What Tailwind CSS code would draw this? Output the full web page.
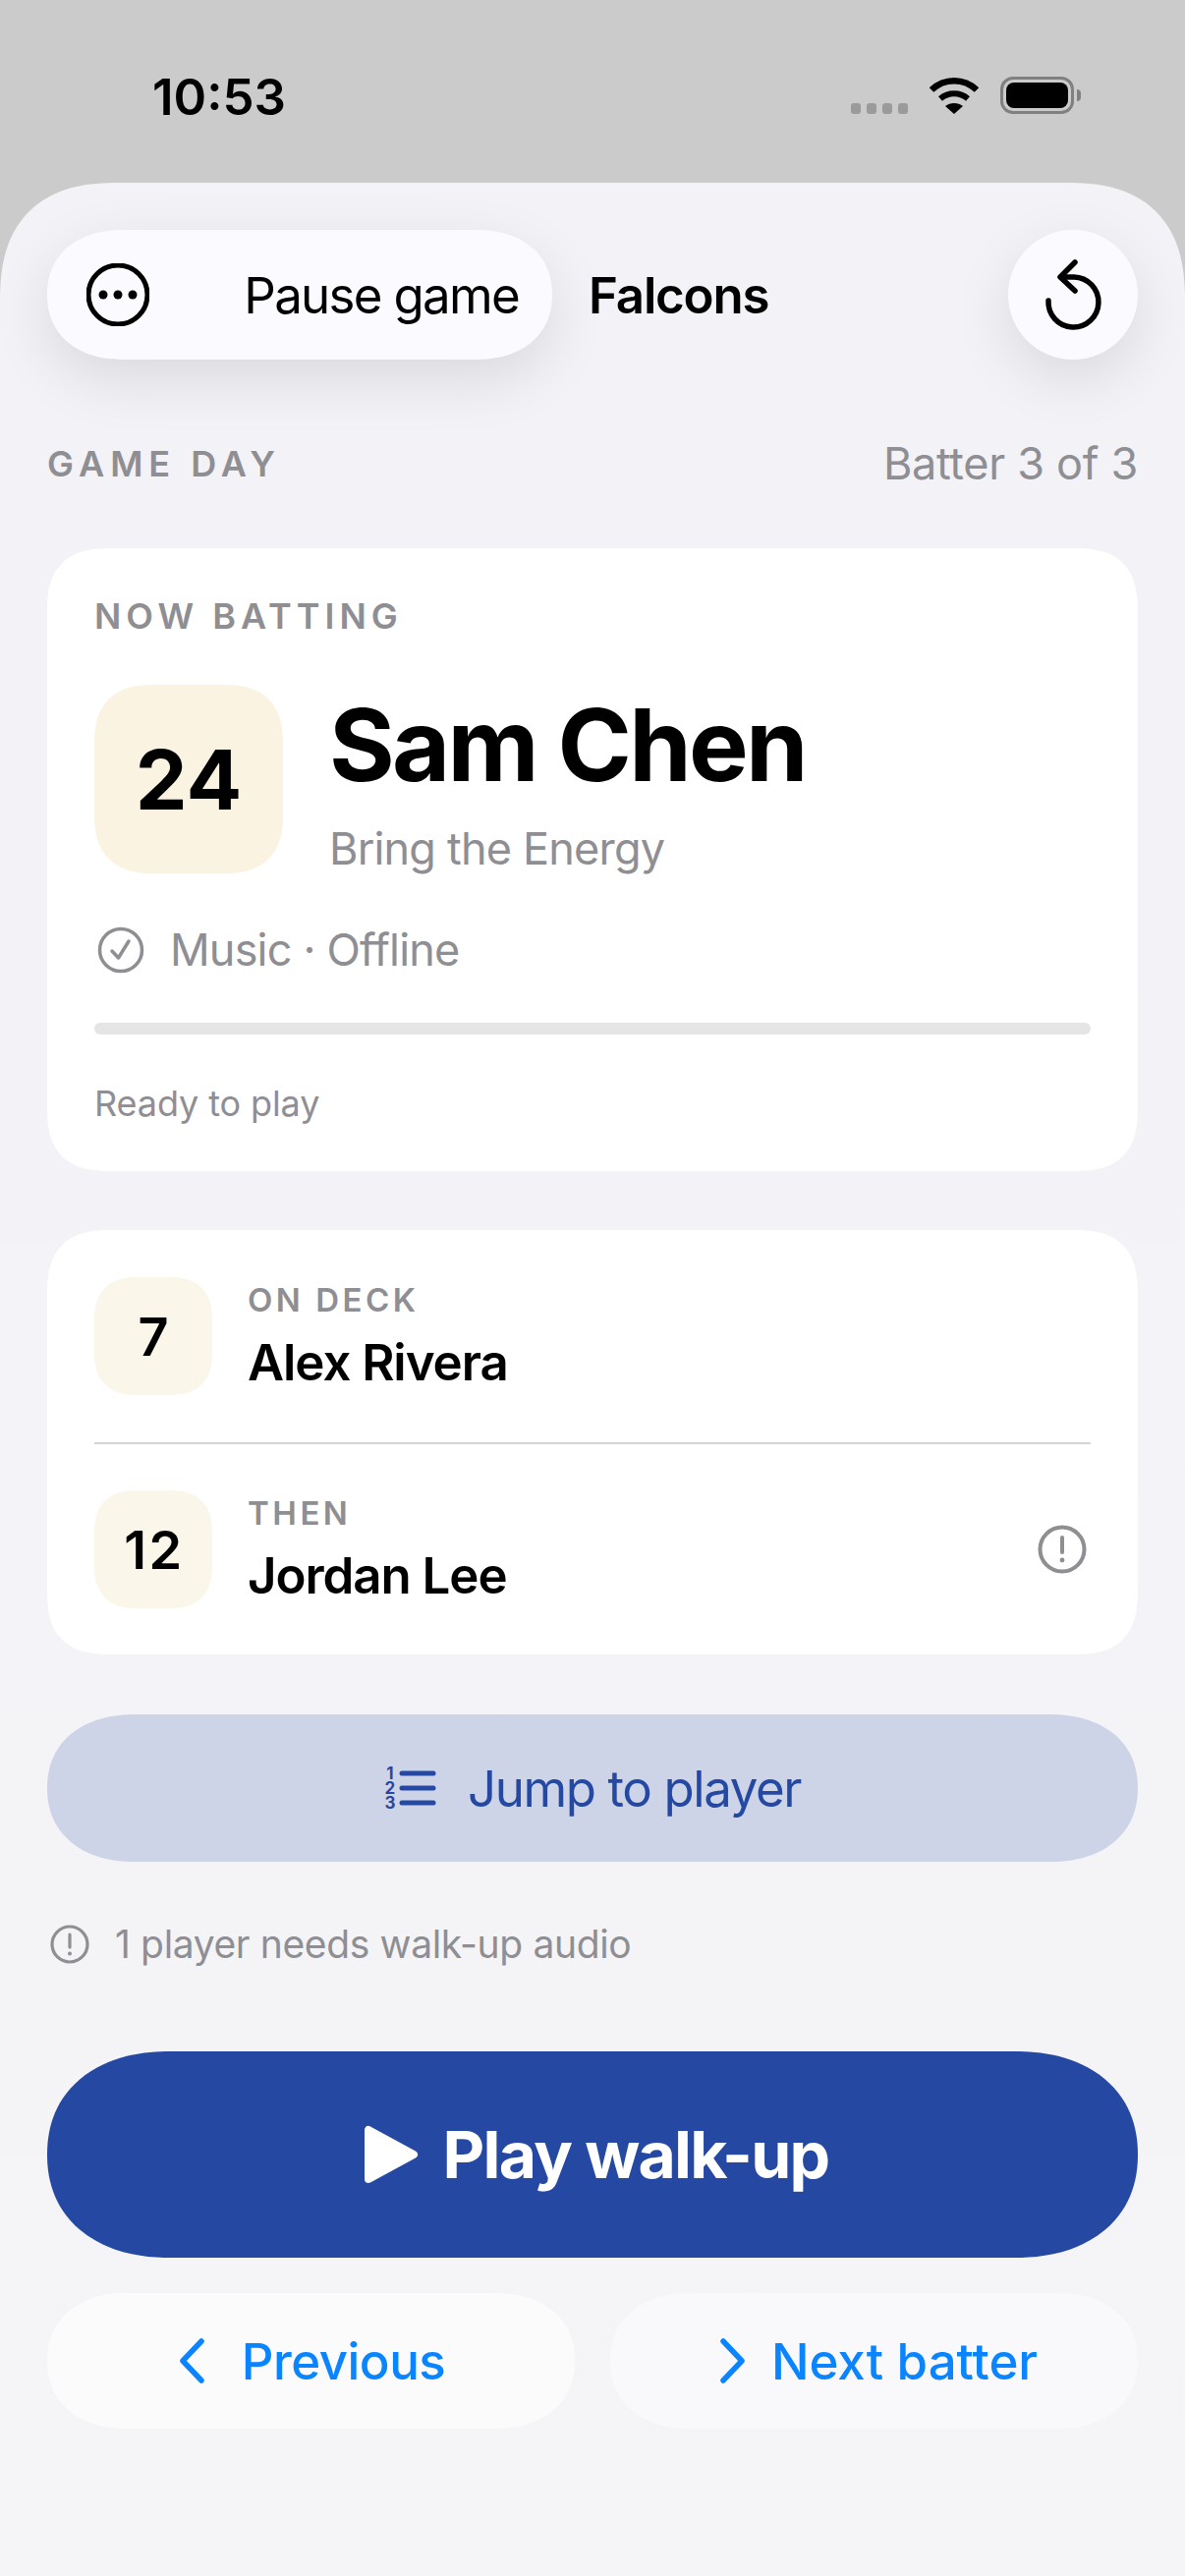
<!DOCTYPE html>
<html lang="en">
<head>
    <meta charset="UTF-8">
    <meta name="viewport" content="width=device-width, initial-scale=1.0">
    <title>Game Day - Falcons</title>
    <script src="https://cdn.jsdelivr.net/npm/@tailwindcss/browser@4"></script>
</head>
<body class="h-[2622px] w-[1206px] overflow-hidden bg-[#cbcbcb] font-['Inter',sans-serif] text-black">
<!-- Status bar -->
<div class="flex h-[186px] items-start justify-between pl-[155px] pr-[106px] pt-[68px]">
    <span class="text-[51px] leading-[62px] font-semibold">10:53</span>
    <div class="flex items-end gap-[22px] pt-[10px]">
        <div class="flex gap-[6px]">
            <span class="h-[11px] w-[10px] rounded-[3px] bg-[#9b9b9b]"></span>
            <span class="h-[11px] w-[10px] rounded-[3px] bg-[#9b9b9b]"></span>
            <span class="h-[11px] w-[10px] rounded-[3px] bg-[#9b9b9b]"></span>
            <span class="h-[11px] w-[10px] rounded-[3px] bg-[#9b9b9b]"></span>
        </div>
        <svg class="h-[38px] w-[50px]" viewBox="0 0 50 38" fill="none">
            <path d="M2 13.5C15 1 35 1 48 13.5" stroke="#000" stroke-width="6.5"/>
            <path d="M11 22.5C19 15.5 31 15.5 39 22.5" stroke="#000" stroke-width="6"/>
            <path d="M25 38L16 30C21 26 29 26 34 30Z" fill="#000"/>
        </svg>
        <div class="flex items-center gap-[3px]">
            <div class="h-[38px] w-[75px] rounded-[13px] border-[3px] border-[#808080] p-[3px]">
                <div class="h-full w-full rounded-[8px] bg-black"></div>
            </div>
            <span class="h-[12px] w-[4px] rounded-r-full bg-[#808080]"></span>
        </div>
    </div>
</div>

<!-- Sheet -->
<div class="flex h-[2436px] flex-col overflow-hidden rounded-t-[120px] [corner-shape:superellipse(1.3)] bg-gradient-to-b from-[#f2f2f7] to-[#f5f5f7] px-[48px] pt-[48px]">
    <!-- Header -->
    <div class="flex h-[132px] items-center">
        <div class="flex h-[132px] w-[514px] items-center justify-between rounded-[78px/66px] [corner-shape:superellipse(1.15)] bg-[#fbfbff] pl-[40px] pr-[34px] shadow-[0_20px_60px_rgba(0,0,0,0.1)]">
            <svg class="h-[64px] w-[64px]" viewBox="0 0 64 64" fill="none">
                <circle cx="32" cy="32" r="30" stroke="#000" stroke-width="5"/>
                <circle cx="17" cy="32" r="4.5" fill="#000"/>
                <circle cx="32" cy="32" r="4.5" fill="#000"/>
                <circle cx="47" cy="32" r="4.5" fill="#000"/>
            </svg>
            <span class="pt-[2px] text-[51px] leading-[62px] tracking-[-1.7px]">Pause game</span>
        </div>
        <span class="ml-[37px] pt-[2px] text-[51px] leading-[62px] font-semibold tracking-[-1.2px]">Falcons</span>
        <div class="ml-auto h-[132px] w-[132px] rounded-full bg-[#fbfbff] shadow-[0_20px_60px_rgba(0,0,0,0.1)]">
            <svg class="h-[132px] w-[132px]" viewBox="0 0 132 132" fill="none" stroke="#000" stroke-width="5.5" stroke-linecap="round" stroke-linejoin="round">
                <path d="M41 72A25.5 25.5 0 1 0 67 48H54"/>
                <path d="M68 33L53 48L68 62"/>
            </svg>
        </div>
    </div>

    <!-- Section title -->
    <div class="mt-[79px] flex h-[54px] items-center justify-between">
        <span class="text-[36px] font-semibold tracking-[6px] text-[#8e8e93]">GAME DAY</span>
        <span class="text-[45px] tracking-[-0.3px] text-[#8e8e93]">Batter 3 of 3</span>
    </div>

    <!-- Now batting -->
    <div class="mt-[59px] h-[634px] rounded-[66px] [corner-shape:superellipse(1.4)] bg-white px-[48px] pt-[45px]">
        <div class="text-[36px] leading-[48px] font-semibold tracking-[5px] text-[#8e8e93]">NOW BATTING</div>
        <div class="mt-[46px] flex h-[192px]">
            <div class="flex h-[192px] w-[192px] items-center justify-center rounded-[60px] [corner-shape:superellipse(1.3)] bg-[#fbf3e2] pt-[2px] text-[84px] font-bold">24</div>
            <div class="ml-[47px]">
                <div class="mt-[-1px] text-[102px] leading-[124px] font-bold tracking-[-2.7px]">Sam Chen</div>
                <div class="mt-[16px] text-[45px] leading-[56px] tracking-[-0.8px] text-[#8e8e93]">Bring the Energy</div>
            </div>
        </div>
        <div class="mt-[50px] flex h-[56px] items-center">
            <svg class="ml-[3px] h-[48px] w-[48px]" viewBox="0 0 48 48" fill="none" stroke="#8e8e93" stroke-width="3.5" stroke-linecap="round" stroke-linejoin="round">
                <circle cx="24" cy="24" r="21.5"/>
                <path d="M15 25L21.5 32L32 15"/>
            </svg>
            <span class="ml-[26px] text-[45px] tracking-[-0.8px] text-[#8e8e93]">Music · Offline</span>
        </div>
        <div class="mt-[46px] h-[12px] rounded-full bg-[#e5e5e6]"></div>
        <div class="mt-[46px] text-[36px] leading-[48px] tracking-[-0.1px] text-[#8e8e93]">Ready to play</div>
    </div>

    <!-- Up next -->
    <div class="mt-[60px] h-[432px] rounded-[66px] [corner-shape:superellipse(1.4)] bg-white px-[48px] pt-[48px]">
        <div class="flex h-[120px] items-center">
            <div class="flex h-[120px] w-[120px] items-center justify-center rounded-[44px] [corner-shape:superellipse(1.3)] bg-[#fbf6ea] text-[54px] font-semibold">7</div>
            <div class="ml-[36px]">
                <div class="mt-[-2px] text-[33px] leading-[44px] font-semibold tracking-[3.5px] text-[#8e8e93]">ON DECK</div>
                <div class="mt-[11px] text-[51px] leading-[62px] font-semibold tracking-[-1.05px]">Alex Rivera</div>
            </div>
        </div>
        <div class="mt-[48px] h-[2px] bg-[#d4d4d6]"></div>
        <div class="mt-[47px] flex h-[120px] items-center">
            <div class="flex h-[120px] w-[120px] items-center justify-center rounded-[44px] [corner-shape:superellipse(1.3)] bg-[#fbf6ea] pl-[2px] text-[54px] font-semibold tracking-[2.5px]">12</div>
            <div class="ml-[36px]">
                <div class="mt-[-2px] text-[33px] leading-[44px] font-semibold tracking-[3.5px] text-[#8e8e93]">THEN</div>
                <div class="mt-[11px] text-[51px] leading-[62px] font-semibold tracking-[-1.05px]">Jordan Lee</div>
            </div>
            <svg class="mr-[4px] ml-auto h-[50px] w-[50px]" viewBox="0 0 50 50" fill="none" stroke="#8e8e93" stroke-linecap="round">
                <circle cx="25" cy="25" r="22.5" stroke-width="4"/>
                <path d="M25 13V28" stroke-width="4"/>
                <circle cx="25" cy="36" r="1.2" stroke-width="2.5" fill="#8e8e93"/>
            </svg>
        </div>
    </div>

    <!-- Jump to player -->
    <div class="mt-[61px] flex h-[150px] items-center justify-center rounded-[90px/75px] [corner-shape:superellipse(1.15)] bg-[#ced4e7] text-[#2549a3]">
        <div class="flex w-[12px] flex-col items-center text-[17px] leading-[15px] font-bold">
            <span>1</span><span>2</span><span>3</span>
        </div>
        <svg class="ml-[3px] h-[40px] w-[38px]" viewBox="0 0 38 40" fill="none" stroke="#2549a3" stroke-width="5" stroke-linecap="round">
            <path d="M3 5H35"/>
            <path d="M3 20H35"/>
            <path d="M3 35H35"/>
        </svg>
        <span class="ml-[32px] pt-[2px] text-[51px] leading-[62px] tracking-[-1.4px]">Jump to player</span>
    </div>

    <!-- Warning -->
    <div class="mt-[60px] flex h-[48px] items-center">
        <svg class="ml-[3px] h-[40px] w-[40px]" viewBox="0 0 40 40" fill="none" stroke="#8e8e93" stroke-linecap="round">
            <circle cx="20" cy="20" r="18" stroke-width="3.2"/>
            <path d="M20 10V23" stroke-width="3.2"/>
            <circle cx="20" cy="29.5" r="1" stroke-width="2" fill="#8e8e93"/>
        </svg>
        <span class="ml-[26px] text-[39px] tracking-[-0.36px] text-[#8e8e93]">1 player needs walk-up audio</span>
    </div>

    <!-- Play -->
    <div class="mt-[85px] flex h-[210px] items-center justify-center rounded-[125px/105px] [corner-shape:superellipse(1.15)] bg-[#2549a3] pl-[8px] text-white">
        <svg class="h-[60px] w-[56px]" viewBox="0 0 56 60" fill="#fff" stroke="#fff" stroke-width="8" stroke-linejoin="round">
            <path d="M5 5V55L51 30Z"/>
        </svg>
        <span class="ml-[24px] text-[66px] leading-[80px] font-bold tracking-[-1.7px]">Play walk-up</span>
    </div>

    <!-- Prev / next -->
    <div class="mt-[36px] grid grid-cols-2 gap-[36px]">
        <div class="flex h-[138px] items-center justify-center rounded-[82px/69px] [corner-shape:superellipse(1.15)] bg-[#fbfbfc] pl-[2px] text-[#0a84ff]">
            <svg class="h-[46px] w-[28px]" viewBox="0 0 28 46" fill="none" stroke="#0a84ff" stroke-width="5.5" stroke-linecap="round" stroke-linejoin="round">
                <path d="M23 3L4 23L23 43"/>
            </svg>
            <span class="ml-[36px] pt-[2px] text-[51px] leading-[62px] font-medium tracking-[-0.5px]">Previous</span>
        </div>
        <div class="flex h-[138px] items-center justify-center rounded-[82px/69px] [corner-shape:superellipse(1.15)] bg-[#f9f9fb] pl-[8px] text-[#0a84ff]">
            <svg class="h-[46px] w-[28px]" viewBox="0 0 28 46" fill="none" stroke="#0a84ff" stroke-width="5.5" stroke-linecap="round" stroke-linejoin="round">
                <path d="M5 3L24 23L5 43"/>
            </svg>
            <span class="ml-[26px] pt-[2px] text-[51px] leading-[62px] font-medium">Next batter</span>
        </div>
    </div>
</div>
</body>
</html>
